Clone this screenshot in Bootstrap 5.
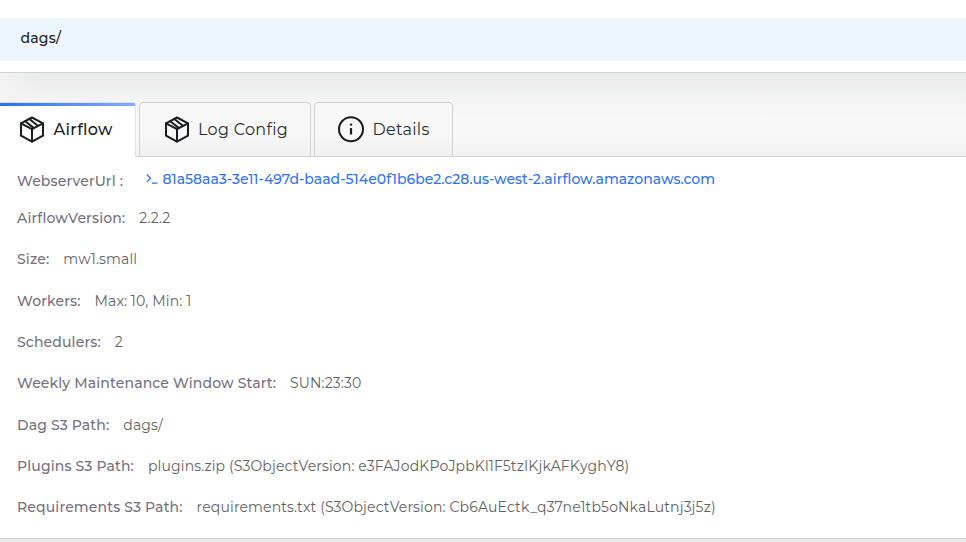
<!DOCTYPE html>
<html lang="en">
<head>
<meta charset="utf-8">
<title>Airflow environment</title>
<link href="https://cdn.jsdelivr.net/npm/bootstrap@5.3.0/dist/css/bootstrap.min.css" rel="stylesheet">
<style>
body{font-family:Montserrat,Inter,"Open Sans",sans-serif;font-size:14px;line-height:20px;color:#1b1d21;background:#fff;overflow:hidden}
.page{height:542px}
.head-block{height:73px;padding-top:18px;border-bottom:1px solid #d3d3d3}
.path-band{height:43px;background:#edf6fe;padding:0 0 3px 20.5px;font-weight:500;letter-spacing:.2px}
.tab-zone{height:84px;padding-top:29px;background:linear-gradient(90deg,#f3f3f3,#f3f3f300 40px) 0 0/40px 28px no-repeat,linear-gradient(#e8e9e9,#f4f4f4 32%,#f8f8f8 55%,#f8f8f8 75%,#f1f1f1);border-bottom:1px solid #d3d3d3}
.nav-tabs.env-tabs{border:0;gap:3px;height:55px;flex-wrap:nowrap}
.env-tabs .nav-link{height:55px;margin:0;border:1px solid #d3d3d3;border-radius:4px 4px 0 0;background:linear-gradient(#f8f8f8 55%,#f0f0f0);color:#2b2d30;font-size:16px;line-height:24px;letter-spacing:.3px;padding:0 0 0 23px}
.env-tabs .nav-link.active{position:relative;background:#fff;color:#1b1d21;font-weight:500;border-left:0;border-bottom-color:#fff;border-radius:0 4px 0 0;padding-left:18px;width:136px}
.env-tabs .nav-link.active::before{content:"";position:absolute;left:0;right:0;top:0;height:3px;background:linear-gradient(90deg,#2970f6,#84abfa)}
.env-tabs svg{width:28px;height:28px;margin-right:7px;flex:none}
.env-tabs .nav-link.active svg{margin-right:7.5px}
.w-log{width:172px}.w-details{width:139px}
.env-tabs .w-details svg{margin-right:6.5px}
.details-panel{height:382px;border-bottom:1px solid #d3d3d3;padding:3px 0 0 17px;box-sizing:border-box}
.field{height:41.36px}
.field .key{color:#74707f;font-weight:500;letter-spacing:.15px;margin-right:14px;white-space:nowrap;flex:none}
.field .val{color:#626264;font-weight:400;letter-spacing:.145px;white-space:nowrap}
.url-field{height:37.2px;padding-top:5px}
.url-link{color:#2f72f3;font-weight:500;text-decoration:none;white-space:nowrap;margin-left:9px;padding-bottom:4px}
.url-link svg{width:12px;height:12px;margin-right:4.5px}
.foot{height:3px;background:#ebebeb}
</style>
<script src="https://cdn.jsdelivr.net/npm/bootstrap@5.3.0/dist/js/bootstrap.bundle.min.js"></script>
</head>
<body>
<svg class="d-none" aria-hidden="true">
<symbol id="box" viewBox="0 0 28 28"><g fill="none" stroke="#1b1c1f" stroke-width="2" stroke-linejoin="round" stroke-linecap="round"><path d="M14 1.5 25 7.3v12.4L14 25.6 3 19.7V7.3z"/><path d="M3 7.3l11 5.8 11-5.8M14 13.1v12.5M11.4 3l8.4 6.7M7.2 5.2l8.2 6.4"/></g></symbol>
</svg>
<div class="page d-flex flex-column">
<header class="head-block"><div class="path-band d-flex align-items-center"><span>dags/</span></div></header>
<div class="tab-zone">
<ul class="nav nav-tabs env-tabs">
<li class="nav-item"><a class="nav-link active d-flex align-items-center" href="#"><svg><use href="#box"/></svg><span>Airflow</span></a></li>
<li class="nav-item"><a class="nav-link w-log d-flex align-items-center" href="#"><svg><use href="#box"/></svg><span>Log Config</span></a></li>
<li class="nav-item"><a class="nav-link w-details d-flex align-items-center" href="#"><svg viewBox="0 0 28 28"><circle cx="13" cy="13.2" r="12" fill="none" stroke="#1b1c1f" stroke-width="2"/><path d="M13 12.1v6.4" stroke="#1b1c1f" stroke-width="2.2"/><circle cx="13" cy="8.6" r="1.2" fill="#1b1c1f"/></svg><span>Details</span></a></li>
</ul>
</div>
<main class="details-panel">
<div class="field url-field d-flex align-items-center"><span class="key">WebserverUrl :</span><a href="#" class="url-link d-flex align-items-center"><svg viewBox="0 0 12 12" fill="none" stroke="#2f72f3" stroke-width="1.3"><path d="M.8 1.5 4.5 5.3.8 9.1M6 10.2h5.5"/></svg><span>81a58aa3-3e11-497d-baad-514e0f1b6be2.c28.us-west-2.airflow.amazonaws.com</span></a></div>
<div class="field d-flex align-items-center"><span class="key">AirflowVersion:</span><span class="val">2.2.2</span></div>
<div class="field d-flex align-items-center"><span class="key">Size:</span><span class="val">mw1.small</span></div>
<div class="field d-flex align-items-center"><span class="key">Workers:</span><span class="val">Max: 10, Min: 1</span></div>
<div class="field d-flex align-items-center"><span class="key">Schedulers:</span><span class="val">2</span></div>
<div class="field d-flex align-items-center"><span class="key">Weekly Maintenance Window Start:</span><span class="val">SUN:23:30</span></div>
<div class="field d-flex align-items-center"><span class="key">Dag S3 Path:</span><span class="val">dags/</span></div>
<div class="field d-flex align-items-center"><span class="key">Plugins S3 Path:</span><span class="val">plugins.zip (S3ObjectVersion: e3FAJodKPoJpbKl1F5tzIKjkAFKyghY8)</span></div>
<div class="field d-flex align-items-center"><span class="key">Requirements S3 Path:</span><span class="val">requirements.txt (S3ObjectVersion: Cb6AuEctk_q37ne1tb5oNkaLutnj3j5z)</span></div>
</main>
<div class="foot"></div>
</div>
</body>
</html>
